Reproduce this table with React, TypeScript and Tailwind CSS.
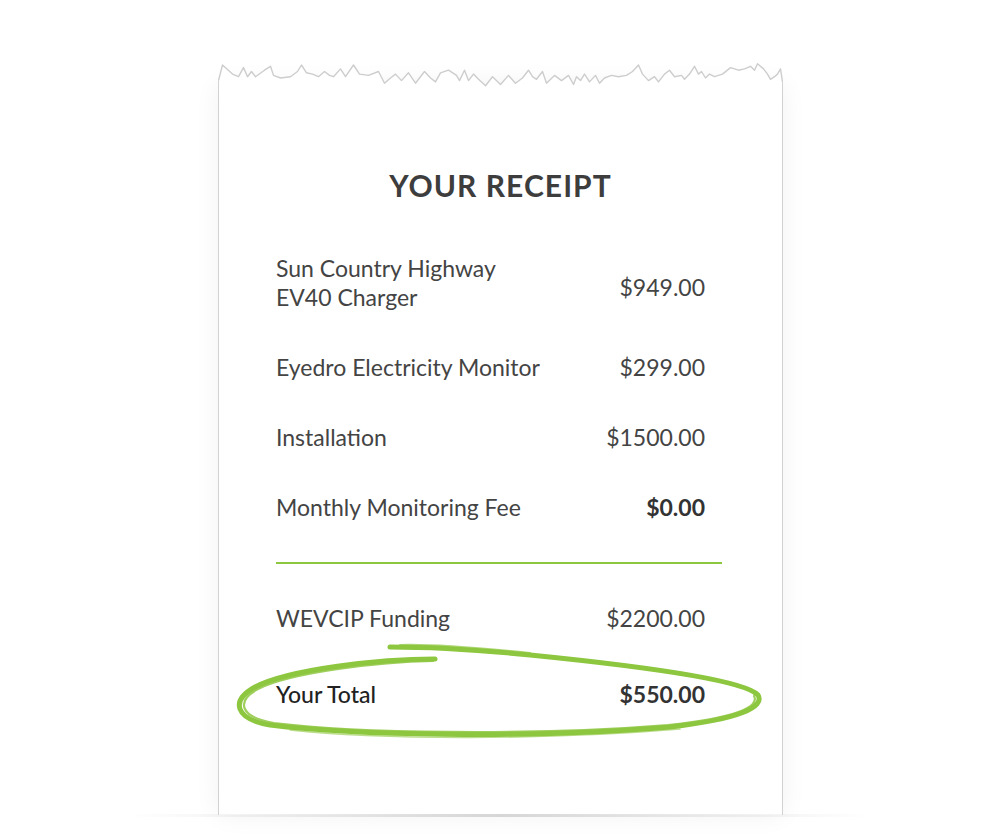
import type { ReactNode } from "react"

const items = [
  { id: "charger", label: ["Sun Country Highway", "EV40 Charger"], amount: "$949.00" },
  { id: "monitor", label: ["Eyedro Electricity Monitor"], amount: "$299.00" },
  { id: "install", label: ["Installation"], amount: "$1500.00" },
  { id: "fee", label: ["Monthly Monitoring Fee"], amount: "$0.00", bold: true },
]

// torn paper edge, hand tuned so it doesn't look like a perfect saw
const tornPoints: [number, number][] = [
  [0, 12], [4, 0], [14, 7], [20, 9], [25, 2], [29, 9], [33, 5], [37, 9], [46, 4], [52, 1], [55, 8],
  [62, 10], [72, 9], [79, 5], [83, 0], [88, 6], [94, 7], [100, 9], [106, 5], [111, 8], [115, 9],
  [122, 3], [127, 9], [135, 0], [141, 7], [150, 8], [160, 5], [166, 14], [172, 10], [177, 7],
  [183, 12], [190, 6], [197, 14], [206, 5], [212, 10], [217, 13], [222, 6], [230, 4], [238, 8],
  [241, 12], [246, 4], [250, 12], [255, 7], [260, 11], [267, 16], [274, 9], [282, 15], [290, 8],
  [297, 14], [304, 10], [310, 4], [314, 9], [318, 11], [324, 5], [328, 14], [336, 8], [343, 12],
  [350, 8], [355, 15], [358, 9], [362, 12], [366, 7], [371, 13], [377, 8], [381, 14], [386, 10],
  [393, 8], [400, 9], [408, 8], [414, 5], [420, 0], [424, 7], [430, 12], [436, 9], [440, 13],
  [446, 7], [451, 4], [456, 9], [463, 8], [466, 11], [471, 7], [476, 1], [480, 7], [483, 5],
  [487, 10], [491, 7], [496, 9], [504, 7], [512, 2], [520, 4], [526, 3], [532, 1], [536, 4],
  [539, -1], [545, 3], [549, 7], [552, 11], [556, 9], [559, 7], [562, 3], [564, 13],
]

function TornEdge() {
  const pts = tornPoints.map(([x, y]) => [x + 0.5, y * 1.3 + 5] as const)
  const line = pts.map(([x, y]) => `${x},${y.toFixed(1)}`).join(" ")
  const first = pts[0]
  const last = pts[pts.length - 1]
  return (
    <svg
      className="absolute left-[-1px] top-[-24px]"
      width="565"
      height="34"
      viewBox="0 0 565 34"
    >
      <polygon points={`0.5,34 ${line} 564.5,34`} fill="#ffffff" />
      <polyline points={line} fill="none" stroke="#cdcdcd" strokeWidth="1.4" strokeLinejoin="round" />
      <path d={`M${first[0]} ${first[1]} V34 M${last[0]} ${last[1]} V34`} stroke="#d2d2d2" strokeWidth="1" />
    </svg>
  )
}

function BrushCircle() {
  return (
    <svg
      className="pointer-events-none absolute left-[-46px] top-[-41px]"
      width="545"
      height="110"
      viewBox="0 0 545 110"
    >
      <g fill="none" stroke="#8dc63f" strokeLinecap="round" strokeLinejoin="round">
        <path
          d="M205 20 C 150 20, 60 30, 25 48 C 0 62, 5 80, 40 86 C 120 96, 300 100, 440 88 C 510 80, 535 68, 528 56 C 515 42, 420 28, 300 16 C 240 10, 190 8, 160 8"
          strokeWidth="5"
        />
        <path
          d="M203 22 C 150 23, 62 33, 28 50 C 6 62, 9 78, 44 84 C 125 94, 300 97, 438 86 C 505 79, 530 68, 524 57"
          strokeWidth="2.2"
          opacity="0.85"
        />
        <path d="M300 14 C 240 8, 200 5, 170 6" strokeWidth="2" opacity="0.7" />
        <path d="M60 91 C 150 101, 320 101, 450 90" strokeWidth="1.6" opacity="0.6" />
      </g>
    </svg>
  )
}

function Row({
  left,
  right,
  bold,
  className,
  amountClassName,
}: {
  left: ReactNode
  right: ReactNode
  bold?: boolean
  className?: string
  amountClassName?: string
}) {
  return (
    <div className={`flex items-center justify-between pr-[77px] leading-[29px] ${className ?? ""}`}>
      <div>{left}</div>
      <div className={`${bold ? "font-bold text-[#333]" : ""} ${amountClassName ?? ""}`}>{right}</div>
    </div>
  )
}

export default function App() {
  return (
    <div className="relative h-[834px] w-[1000px] overflow-hidden bg-white font-['Lato','Open_Sans',sans-serif]">
      <div className="ml-[218px] pt-[84px]">
        <div className="relative h-[731px] w-[565px] border-x border-[#d2d2d2] bg-white shadow-[0_0_24px_rgba(0,0,0,0.06)]">
          <TornEdge />
          <h1 className="pt-[83px] text-center text-[30px] font-bold leading-[36px] tracking-[0.035em] text-[#3d3d3d]">
            YOUR RECEIPT
          </h1>
          <div className="mt-[51px] pl-[57px] text-[23px] text-[#444]">
            <div className="flex flex-col gap-[41px]">
              {items.map(item => (
                <Row
                  key={item.id}
                  left={item.label.map(line => (
                    <div key={line}>{line}</div>
                  ))}
                  right={item.amount}
                  bold={item.bold}
                  amountClassName={item.label.length > 1 ? "pt-[9px]" : ""}
                />
              ))}
            </div>
            <div className="mr-[60px] mt-[40px] h-[1.5px] bg-[#8dc63f]" />
            <Row className="mt-[40px]" left="WEVCIP Funding" right="$2200.00" />
            <div className="relative mt-[47px]">
              <BrushCircle />
              <Row className="relative font-medium text-[#222]" left="Your Total" right="$550.00" bold />
            </div>
          </div>
        </div>
      </div>
      <div className="absolute left-[130px] top-[814px] h-[3px] w-[740px] bg-gradient-to-r from-transparent via-[#d6d6d6] to-transparent" />
    </div>
  )
}
